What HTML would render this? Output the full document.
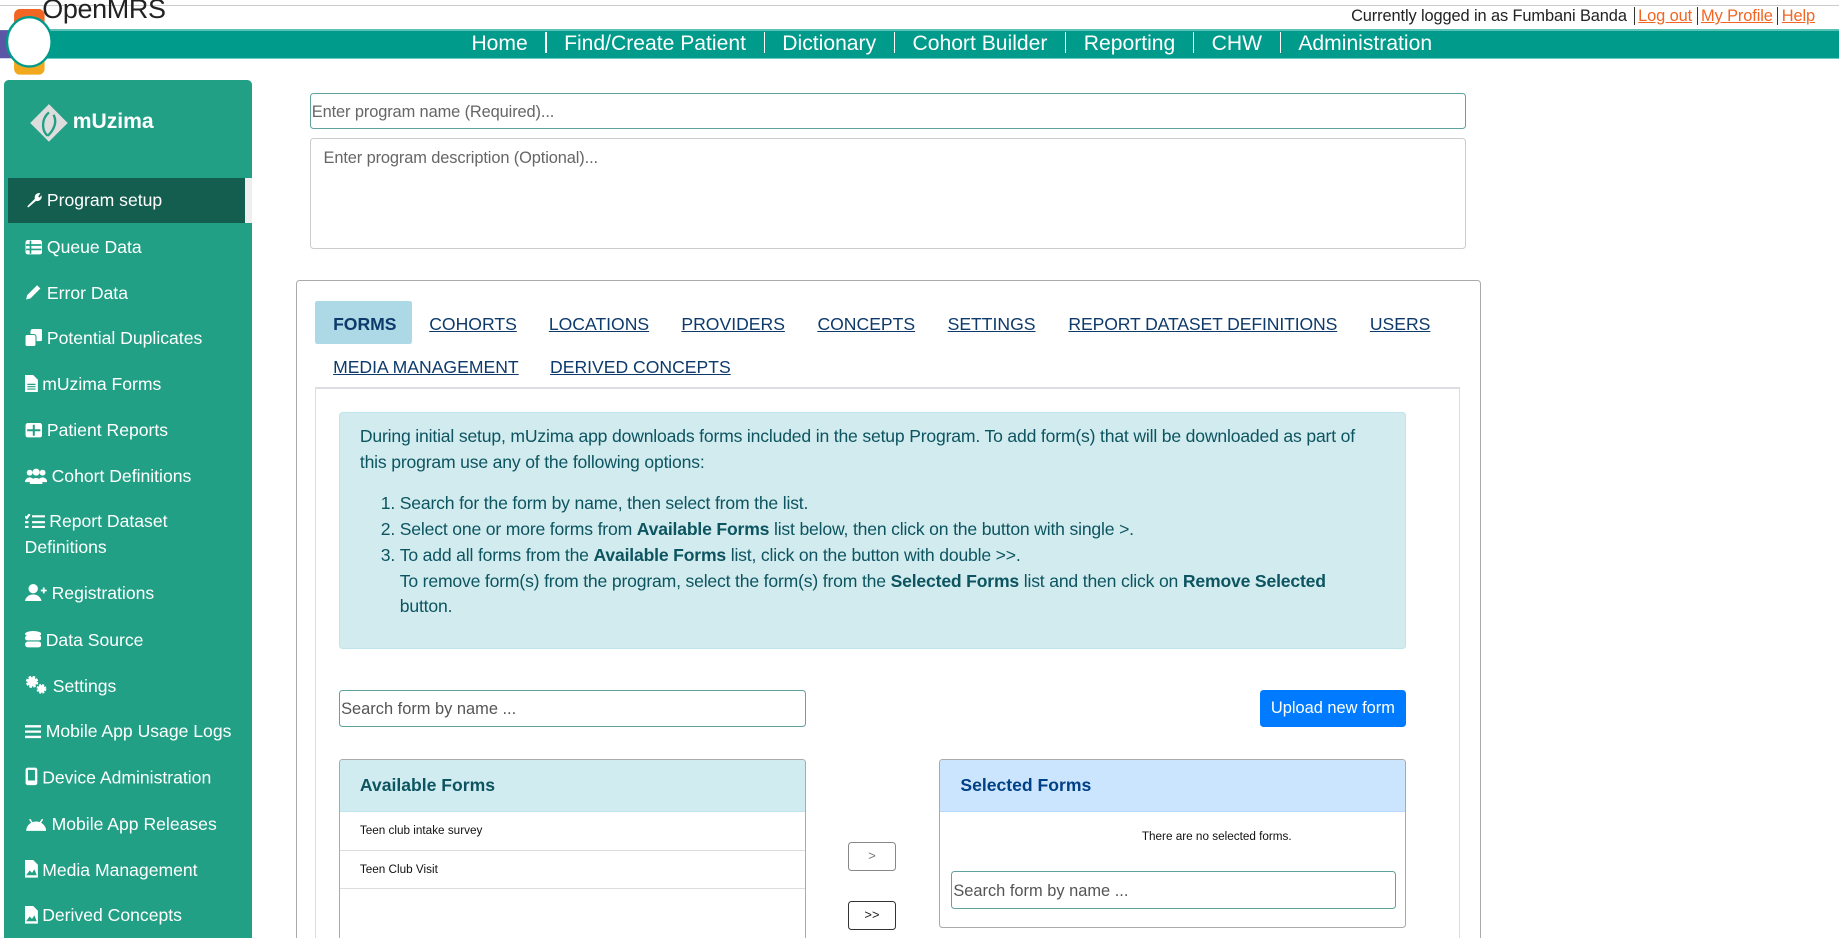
<!DOCTYPE html>
<html><head><meta charset="utf-8"><style>
html,body{margin:0;padding:0;background:#fff;overflow:hidden}
body{width:1839px;height:939px}
#w{zoom:1.1728;width:1568px;height:800px;position:relative;font-family:"Liberation Sans",sans-serif;overflow:hidden}
.a{position:absolute}
.nav{top:25px;left:40px;right:0;height:25px;background:#009b8b;border-top:2px solid #5cc0b5;border-bottom:1px solid #6cc;box-sizing:border-box}
.navt{top:27px;left:387px;color:#fff;font-size:18px;white-space:nowrap}
.navt span{padding:0 15px}
.navt i{display:inline-block;width:1px;height:18px;background:#fff;vertical-align:-2px;font-style:normal}
.side{left:3px;top:68px;width:212px;height:740px;background:#21a085;border-radius:4px 4px 0 0}
.it{position:absolute;left:21px;color:#fff;font-size:15px;white-space:nowrap}
.it svg{vertical-align:-2px;margin-right:4px}
.tab{position:absolute;top:268px;font-size:15px;color:#0d3a6b;text-decoration:underline}
.info{left:289px;top:351px;width:910px;height:202px;background:#d1ebee;border:1px solid #bee5eb;border-radius:3px;color:#0c5460;font-size:15px;line-height:22px;box-sizing:border-box;letter-spacing:-0.15px}
</style></head><body><div id="w">
<div class="a" style="left:0;top:4px;width:1568px;height:1px;background:#ccc"></div>
<div class="nav a"></div>
<div class="a" style="left:36px;top:-5px;font-size:23px;color:#222;letter-spacing:-0.3px">OpenMRS</div>
<svg class="a" style="left:0;top:8px" width="52" height="56" viewBox="0 0 52 56">
<rect x="12" y="0" width="26" height="16" rx="5" fill="#f26522"/>
<rect x="0" y="18" width="14" height="24" fill="#5b57a6"/>
<rect x="12" y="40" width="26" height="16" rx="5" fill="#f2a81d"/>
<ellipse cx="25" cy="28" rx="19" ry="21" fill="#fff" stroke="#009b8b" stroke-width="2"/>
</svg>
<div class="navt a"><span>Home</span><i></i><span>Find/Create Patient</span><i></i><span>Dictionary</span><i></i><span>Cohort Builder</span><i></i><span>Reporting</span><i></i><span>CHW</span><i></i><span>Administration</span></div>
<div class="a" style="left:1152px;top:6px;font-size:14px;color:#222;white-space:nowrap;letter-spacing:-0.1px">Currently logged in as Fumbani Banda <span style="border-left:1px solid #333;padding-left:3px;margin-left:2px;color:#f26522;text-decoration:underline">Log out</span> <span style="border-left:1px solid #333;padding-left:3px;color:#f26522;text-decoration:underline">My Profile</span> <span style="border-left:1px solid #333;padding-left:3px;color:#f26522;text-decoration:underline">Help</span></div>

<div class="side a"></div>
<svg class="a" style="left:25px;top:88px" width="34" height="34" viewBox="0 0 34 34"><path d="M17 1 L33 17 L17 33 L1 17Z" fill="#ddd"/><path d="M17 8 C10 14 11 24 16 28 M16 28 C22 22 24 16 21 10" stroke="#21a085" stroke-width="2" fill="none"/></svg>
<div class="a" style="left:62px;top:94px;color:#fff;font-size:18px;font-weight:bold">mUzima</div>
<div class="a" style="left:7px;top:152px;width:202px;height:38px;background:#135e4f"></div>
<div class="a" style="left:209px;top:152px;width:6px;height:38px;background:#eee"></div>
<div class="it" style="top:162px"><svg width="15" height="15" viewBox="0 0 16 16"><path d="M2 14 L9 7 A4 4 0 0 1 14 2 L12 5 L13 6 L15 4 A4 4 0 0 1 10 9 L3 15Z" fill="#fff"/></svg>Program setup</div>
<div class="it" style="top:202px"><svg width="15" height="14" viewBox="0 0 16 14"><rect x="0.5" y="0.5" width="15" height="13" rx="2" fill="#fff"/><path d="M5 1v12M1 5h14M1 9h14" stroke="#21a085" stroke-width="1.5"/></svg>Queue Data</div>
<div class="it" style="top:241px"><svg width="15" height="15" viewBox="0 0 16 16"><path d="M1 15 L2 11 L11 2 L14 5 L5 14Z" fill="#fff"/></svg>Error Data</div>
<div class="it" style="top:280px"><svg width="15" height="15" viewBox="0 0 16 16"><rect x="5" y="0" width="11" height="11" rx="2" fill="#fff"/><rect x="0" y="5" width="10" height="11" rx="2" fill="#fff" stroke="#21a085"/></svg>Potential Duplicates</div>
<div class="it" style="top:319px"><svg width="11" height="15" viewBox="0 0 11 15"><path d="M0 0h7l4 4v11H0z" fill="#fff"/><path d="M2 8h7M2 10h7M2 12h7" stroke="#21a085"/></svg>mUzima Forms</div>
<div class="it" style="top:358px"><svg width="15" height="14" viewBox="0 0 16 14"><rect x="0.5" y="0.5" width="15" height="13" rx="2" fill="#fff"/><path d="M8 2v10M2 7h12" stroke="#21a085" stroke-width="1.8"/></svg>Patient Reports</div>
<div class="it" style="top:397px"><svg width="19" height="14" viewBox="0 0 19 14"><circle cx="4" cy="4" r="2.5" fill="#fff"/><circle cx="15" cy="4" r="2.5" fill="#fff"/><circle cx="9.5" cy="3.5" r="3" fill="#fff"/><path d="M0 12a4 4 0 0 1 8 0zM11 12a4 4 0 0 1 8 0zM4 14a5.5 5.5 0 0 1 11 0z" fill="#fff"/></svg>Cohort Definitions</div>
<div class="it" style="line-height:22px;white-space:normal;width:180px;top:434px"><svg width="17" height="13" viewBox="0 0 17 13"><path d="M0 2l1.5 1.5L4 0M0 7h3M0 11h3M6 2h11M6 7h11M6 11h11" stroke="#fff" stroke-width="1.8" fill="none"/></svg>Report Dataset Definitions</div>
<div class="it" style="top:497px"><svg width="19" height="15" viewBox="0 0 19 15"><circle cx="7" cy="4" r="4" fill="#fff"/><path d="M0 15a7 6 0 0 1 14 0z" fill="#fff"/><path d="M16 3v5M13.5 5.5h5" stroke="#fff" stroke-width="1.5"/></svg>Registrations</div>
<div class="it" style="top:537px"><svg width="14" height="15" viewBox="0 0 14 15"><ellipse cx="7" cy="2.5" rx="7" ry="2.5" fill="#fff"/><rect x="0" y="4" width="14" height="4" rx="2" fill="#fff"/><rect x="0" y="9" width="14" height="5" rx="2.5" fill="#fff"/></svg>Data Source</div>
<div class="it" style="top:576px"><svg width="20" height="15" viewBox="0 0 20 15"><circle cx="6" cy="5" r="4" fill="#fff" stroke="#fff" stroke-dasharray="2 1.2" stroke-width="2.5"/><circle cx="14" cy="11" r="3.2" fill="#fff" stroke="#fff" stroke-dasharray="1.6 1" stroke-width="2"/></svg>Settings</div>
<div class="it" style="top:615px"><svg width="14" height="13" viewBox="0 0 14 13"><path d="M0 2h14M0 6.5h14M0 11h14" stroke="#fff" stroke-width="2"/></svg>Mobile App Usage Logs</div>
<div class="it" style="top:654px"><svg width="11" height="16" viewBox="0 0 11 16"><rect x="0.5" y="0.5" width="10" height="15" rx="2" fill="#fff"/><rect x="2.5" y="2.5" width="6" height="9" fill="#21a085"/></svg>Device Administration</div>
<div class="it" style="top:694px"><svg width="19" height="12" viewBox="0 0 19 12"><path d="M1 11a8.5 8 0 0 1 17 0z" fill="#fff"/><path d="M4 1l2 3M15 1l-2 3" stroke="#fff" stroke-width="1.3"/></svg>Mobile App Releases</div>
<div class="it" style="top:733px"><svg width="11" height="15" viewBox="0 0 11 15"><path d="M0 0h7l4 4v11H0z" fill="#fff"/><path d="M1 13l3-4 2 2 2-3 2 5z" fill="#21a085"/></svg>Media Management</div>
<div class="it" style="top:772px"><svg width="11" height="15" viewBox="0 0 11 15"><path d="M0 0h7l4 4v11H0z" fill="#fff"/><path d="M1 13l3-4 2 2 2-3 2 5z" fill="#21a085"/></svg>Derived Concepts</div>

<div class="a" style="left:264px;top:79px;width:986px;height:31px;border:1px solid #5fa39c;border-radius:3px;box-sizing:border-box;font-size:14px;color:#666;padding:8px 0 0 1px;letter-spacing:-0.1px">Enter program name (Required)...</div>
<div class="a" style="left:264px;top:118px;width:986px;height:94px;border:1px solid #ccc;border-radius:3px;box-sizing:border-box;font-size:14px;color:#666;padding:8px 0 0 11px;letter-spacing:-0.1px">Enter program description (Optional)...</div>

<div class="a" style="left:252px;top:239px;width:1011px;height:580px;border:1px solid #aaa;border-radius:3px;box-sizing:border-box"></div>
<div class="a" style="left:269px;top:257px;width:82px;height:36px;background:#add8e6;border-radius:2px"></div>
<div class="tab" style="left:284px;font-weight:bold;text-decoration:none">FORMS</div>
<div class="tab" style="left:366px">COHORTS</div>
<div class="tab" style="left:468px">LOCATIONS</div>
<div class="tab" style="left:581px">PROVIDERS</div>
<div class="tab" style="left:697px">CONCEPTS</div>
<div class="tab" style="left:808px">SETTINGS</div>
<div class="tab" style="left:911px;letter-spacing:-0.1px">REPORT DATASET DEFINITIONS</div>
<div class="tab" style="left:1168px">USERS</div>
<div class="tab" style="left:284px;top:304px">MEDIA MANAGEMENT</div>
<div class="tab" style="left:469px;top:304px">DERIVED CONCEPTS</div>
<div class="a" style="left:269px;top:330px;width:976px;height:490px;border:1px solid #ddd;border-top:2px solid #dcdde0;box-sizing:border-box"></div>

<div class="info a"><div style="padding:10px 17px 0">During initial setup, mUzima app downloads forms included in the setup Program. To add form(s) that will be downloaded as part of this program use any of the following options:</div>
<ol style="margin:13px 0 0;padding-left:51px;width:810px">
<li>Search for the form by name, then select from the list.</li>
<li>Select one or more forms from <b>Available Forms</b> list below, then click on the button with single &gt;.</li>
<li>To add all forms from the <b>Available Forms</b> list, click on the button with double &gt;&gt;.<br>To remove form(s) from the program, select the form(s) from the <b>Selected Forms</b> list and then click on <b>Remove Selected</b> button.</li></ol></div>

<div class="a" style="left:289px;top:588px;width:398px;height:32px;border:1px solid #5fa39c;border-radius:3px;box-sizing:border-box;font-size:14px;color:#555;padding:8px 0 0 1px">Search form by name ...</div>
<div class="a" style="left:1074px;top:588px;width:125px;height:32px;background:#007bff;border-radius:3px;color:#fff;font-size:14px;text-align:center;line-height:32px">Upload new form</div>

<div class="a" style="left:289px;top:647px;width:398px;height:170px;border:1px solid #aaa;border-radius:3px;box-sizing:border-box;overflow:hidden">
<div style="height:44px;background:#d1ecf1;border-bottom:1px solid #bee5eb;color:#0c5460;font-weight:bold;font-size:15px;line-height:44px;padding-left:17px">Available Forms</div>
<div style="height:32px;border-bottom:1px solid #ddd;font-size:10px;line-height:32px;padding-left:17px;color:#111">Teen club intake survey</div>
<div style="height:32px;border-bottom:1px solid #ddd;font-size:10px;line-height:32px;padding-left:17px;color:#111">Teen Club Visit</div></div>

<div class="a" style="left:723px;top:718px;width:41px;height:25px;border:1px solid #888;border-radius:3px;box-sizing:border-box;text-align:center;font-size:11px;line-height:23px;color:#777">&gt;</div>
<div class="a" style="left:723px;top:768px;width:41px;height:25px;border:1px solid #333;border-radius:3px;box-sizing:border-box;text-align:center;font-size:11px;line-height:23px;color:#222">&gt;&gt;</div>

<div class="a" style="left:801px;top:647px;width:398px;height:144px;border:1px solid #aaa;border-radius:3px;box-sizing:border-box;overflow:hidden">
<div style="height:44px;background:#cce5ff;border-bottom:1px solid #b8daff;color:#004085;font-weight:bold;font-size:15px;line-height:44px;padding-left:17px">Selected Forms</div>
<div style="text-align:center;font-size:10px;color:#111;margin:15px 0 0 75px">There are no selected forms.</div></div>
<div class="a" style="left:811px;top:743px;width:379px;height:32px;border:1px solid #5fa39c;border-radius:3px;box-sizing:border-box;font-size:14px;color:#555;padding:8px 0 0 1px">Search form by name ...</div>
</div></body></html>
